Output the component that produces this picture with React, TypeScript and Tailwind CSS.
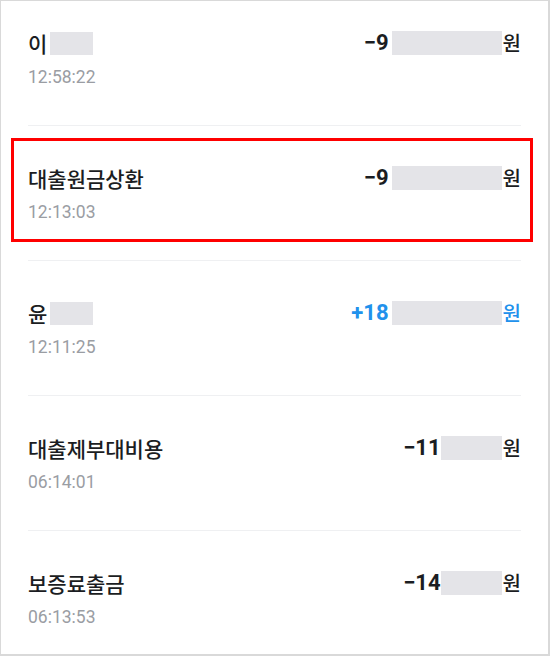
import React from 'react';

type Tx = {
  name: string;
  nameMask?: number;
  time: string;
  sign: string;
  lead: string;
  mask: number;
  gap: number;
  income?: boolean;
  highlight?: boolean;
};

const rows: Tx[] = [
  { name: '이', nameMask: 43, time: '12:58:22', sign: '−', lead: '9', mask: 110, gap: 3 },
  { name: '대출원금상환', time: '12:13:03', sign: '−', lead: '9', mask: 110, gap: 3, highlight: true },
  { name: '윤', nameMask: 43, time: '12:11:25', sign: '+', lead: '18', mask: 110, gap: 3, income: true },
  { name: '대출제부대비용', time: '06:14:01', sign: '−', lead: '11', mask: 61, gap: 0 },
  { name: '보증료출금', time: '06:13:53', sign: '−', lead: '14', mask: 61, gap: 0 },
];

const sans = "font-['Roboto','Noto_Sans_CJK_KR',sans-serif]";

function Row({ tx, first, last }: { tx: Tx; first: boolean; last: boolean }) {
  const color = tx.income ? 'text-[#2191ec]' : 'text-[#1b1d22]';
  return (
    <div
      className={`relative flex items-start justify-between ${first ? 'pt-[28px]' : 'pt-[38px]'} pb-[36px] ${
        last ? '' : 'border-b border-[#eff0f2]'
      }`}
    >
      {tx.highlight && (
        <div className="pointer-events-none absolute -left-[17px] -right-[12px] top-[12px] bottom-[18px] border-[3px] border-[#ff0000]" />
      )}

      {/* left: title + time */}
      <div className="flex flex-col">
        <div className="flex h-[28px] items-center">
          <span className="font-['Noto_Sans_CJK_KR',sans-serif] text-[21px] font-medium leading-[28px] text-[#1b1d22]">
            {tx.name}
          </span>
          {tx.nameMask && (
            <span className="ml-[3px] h-[23px] bg-[#e4e4e8]" style={{ width: tx.nameMask }} />
          )}
        </div>
        <div className={`mt-[8px] ${sans} text-[17.5px] leading-[24px] text-[#9a9da3]`}>{tx.time}</div>
      </div>

      {/* right: amount */}
      <div className={`flex h-[28px] items-center ${color}`}>
        <span className={`${sans} text-[22px] font-bold leading-[28px]`}>
          {tx.sign}
          {tx.lead}
        </span>
        <span className="h-[24px] bg-[#e4e4e8]" style={{ width: tx.mask, marginLeft: tx.gap }} />
        <span className="ml-[1px] font-['Noto_Sans_CJK_KR',sans-serif] text-[20px] font-medium leading-[28px]">원</span>
      </div>
    </div>
  );
}

export default function App() {
  return (
    <div className="h-[656px] w-[550px] overflow-hidden border-l border-t border-r-2 border-b-2 border-[#d9d9d9] bg-white">
      <div className="px-[27px]">
        {rows.map((tx, i) => (
          <Row key={i} tx={tx} first={i === 0} last={i === rows.length - 1} />
        ))}
      </div>
    </div>
  );
}
